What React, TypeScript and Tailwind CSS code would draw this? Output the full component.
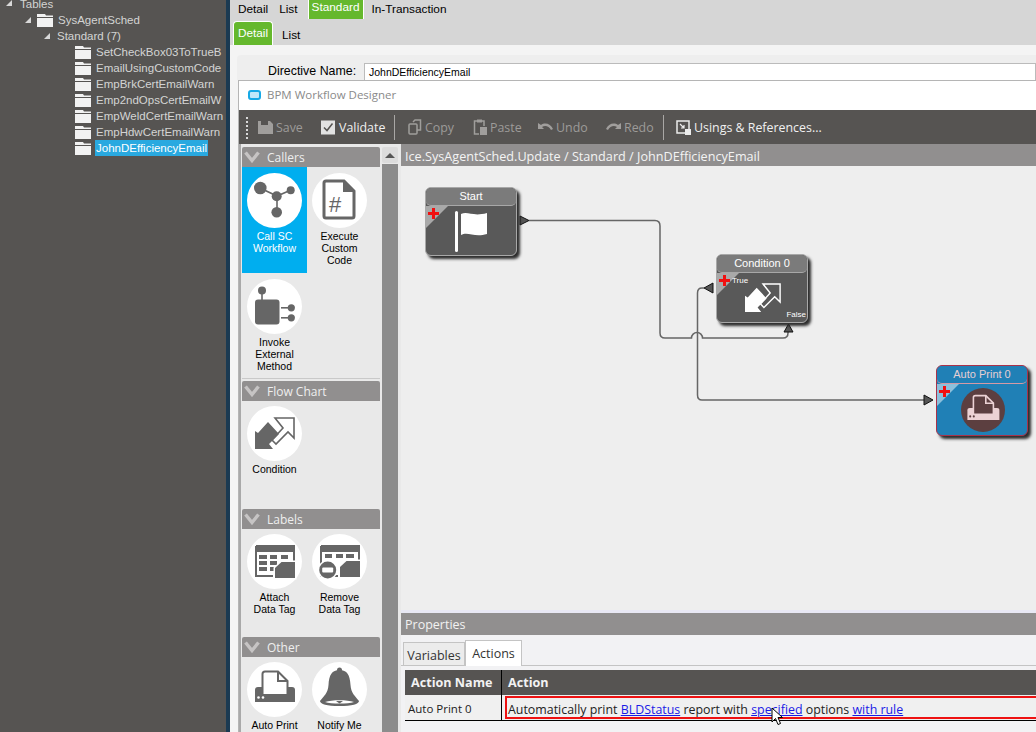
import React from 'react';

const treeFont = "font-['Liberation_Sans',sans-serif]";
const uiFont = "font-['Open_Sans',sans-serif]";

const Folder = () => (
  <svg width="16" height="13" viewBox="0 0 16 13" className="shrink-0">
    <path d="M0 0H8L9 1.5H16V3H0Z M0 4H16V13H0Z" fill="#f2f2f2" />
  </svg>
);

const TreeArrow = () => (
  <svg width="6" height="6" viewBox="0 0 6 6" className="shrink-0">
    <path d="M6 0V6H0Z" fill="#d8d8d8" />
  </svg>
);

const TreeRow = ({ indent, arrow, folder, label, selected }: { indent: string; arrow?: boolean; folder?: boolean; label: string; selected?: boolean }) => (
  <div className={`flex h-[16px] items-center ${indent}`}>
    {arrow && <TreeArrow />}
    {arrow && <div className="w-[6px]" />}
    {folder && <Folder />}
    <span className={`px-[1px] text-[11.5px] leading-[16px] whitespace-nowrap ${folder ? 'ml-[4px]' : ''} ${selected ? 'bg-[#29a9e0] text-white' : 'text-[#d4d4d4]'}`}>{label}</span>
  </div>
);

const Sidebar = () => (
  <div className={`w-[226px] h-full shrink-0 bg-[#565452] overflow-hidden ${treeFont}`}>
    <div className="flex h-[12px] items-start pl-[6px]">
      <TreeArrow />
      <span className="ml-[8px] text-[11.5px] leading-[8px] text-[#d4d4d4]">Tables</span>
    </div>
    <TreeRow indent="pl-[25px]" arrow folder label="SysAgentSched" />
    <TreeRow indent="pl-[44px]" arrow label="Standard (7)" />
    <TreeRow indent="pl-[75px]" folder label="SetCheckBox03ToTrueB" />
    <TreeRow indent="pl-[75px]" folder label="EmailUsingCustomCode" />
    <TreeRow indent="pl-[75px]" folder label="EmpBrkCertEmailWarn" />
    <TreeRow indent="pl-[75px]" folder label="Emp2ndOpsCertEmailW" />
    <TreeRow indent="pl-[75px]" folder label="EmpWeldCertEmailWarn" />
    <TreeRow indent="pl-[75px]" folder label="EmpHdwCertEmailWarn" />
    <TreeRow indent="pl-[75px]" folder label="JohnDEfficiencyEmail" selected />
  </div>
);

// toolbar icons
const SaveIcon = () => (
  <svg width="15" height="15" viewBox="0 0 15 15"><path d="M0 1H3V5H10V1H12L15 4V14H0Z" fill="#a09e9c" /></svg>
);
const CheckIcon = () => (
  <svg width="15" height="15" viewBox="0 0 15 15"><rect width="14" height="14" y="0.5" fill="#e2e2e2" /><path d="M3 7.5L6 10.5L11.5 3.5" fill="none" stroke="#565452" strokeWidth="1.5" /></svg>
);
const CopyIcon = () => (
  <svg width="14" height="16" viewBox="0 0 14 16"><path d="M5 3L7 1H12.5V11H9" fill="none" stroke="#a09e9c" strokeWidth="1.5" /><rect x="1" y="5" width="8" height="10" rx="1" fill="none" stroke="#a09e9c" strokeWidth="1.5" /></svg>
);
const PasteIcon = () => (
  <svg width="14" height="16" viewBox="0 0 14 16"><path d="M6 15H1.5V2H11V7" fill="none" stroke="#a09e9c" strokeWidth="1.5" /><rect x="4" y="0.5" width="5" height="3" fill="#a09e9c" /><rect x="7" y="8" width="7" height="8" fill="#a09e9c" /></svg>
);
const UndoIcon = () => (
  <svg width="15" height="10" viewBox="0 0 15 10"><path d="M0 1V7H6L4 5C7 3 11 4 13 8L15 7C13 2 7 0 3 3Z" fill="#a09e9c" /></svg>
);
const RedoIcon = () => (
  <svg width="15" height="10" viewBox="0 0 15 10"><path d="M15 1V7H9L11 5C8 3 4 4 2 8L0 7C2 2 8 0 12 3Z" fill="#a09e9c" /></svg>
);
const UsingsIcon = () => (
  <svg width="15" height="15" viewBox="0 0 15 15"><rect x="1" y="1" width="12" height="12" fill="none" stroke="#ececec" strokeWidth="1.5" /><path d="M4 4L8 8M8 5V8H5" fill="none" stroke="#ececec" strokeWidth="1.2" /><rect x="9" y="9" width="6" height="6" fill="#ececec" /></svg>
);

const ToolButton = ({ icon, label, off, className }: { icon: React.ReactNode; label: string; off?: boolean; className: string }) => (
  <div className={`flex items-center gap-[3px] ${className}`}>
    {icon}
    <span className={`pt-[1px] text-[12.4px] whitespace-nowrap ${off ? 'text-[#9d9b99]' : 'text-[#f0f0f0]'}`}>{label}</span>
  </div>
);

const Toolbar = () => (
  <div className={`h-[34px] shrink-0 flex items-center pt-[1px] bg-[#565452] ${uiFont}`}>
    <div className="ml-[7px] h-[22px] w-[1px] border-l-2 border-dotted border-[#d8d8d8]" />
    <ToolButton icon={<SaveIcon />} label="Save" off className="ml-[10px] w-[63px]" />
    <ToolButton icon={<CheckIcon />} label="Validate" className="w-[73px]" />
    <div className="h-[25px] w-[1px] bg-[#a9a7a5]" />
    <ToolButton icon={<CopyIcon />} label="Copy" off className="ml-[13px] w-[65px]" />
    <ToolButton icon={<PasteIcon />} label="Paste" off className="w-[65px]" />
    <ToolButton icon={<UndoIcon />} label="Undo" off className="w-[68px]" />
    <ToolButton icon={<RedoIcon />} label="Redo" off className="w-[57px]" />
    <div className="h-[25px] w-[1px] bg-[#a9a7a5]" />
    <ToolButton icon={<UsingsIcon />} label="Usings & References..." className="ml-[12px]" />
  </div>
);

// palette glyphs, all on a 55 unit circle
const WorkflowGlyph = () => (
  <g fill="#666" stroke="#666">
    <path d="M13 15L30 23L44 17M30 23V39" strokeWidth="1.6" fill="none" />
    <circle cx="13.3" cy="15" r="6.3" stroke="none" />
    <circle cx="29.7" cy="23.3" r="5" stroke="none" />
    <circle cx="43.7" cy="17.3" r="4" stroke="none" />
    <circle cx="29.7" cy="39.3" r="5.3" stroke="none" />
  </g>
);
const CodeGlyph = () => (
  <g>
    <path d="M14 8H32L42 18V43A2 2 0 0 1 40 45H14A2 2 0 0 1 12 43V10A2 2 0 0 1 14 8Z" fill="none" stroke="#666" strokeWidth="3" />
    <path d="M31 8L42 19H31Z" fill="#666" />
    <text x="23" y="39" textAnchor="middle" fontSize="22" fontFamily="Liberation Sans" fill="#666">#</text>
  </g>
);
const InvokeGlyph = () => (
  <g fill="#666">
    <circle cx="15" cy="11.5" r="4" />
    <rect x="14.2" y="12" width="1.6" height="9" />
    <rect x="8" y="20.5" width="24.5" height="25" rx="3" />
    <rect x="34" y="28" width="7" height="1.6" />
    <rect x="34" y="38" width="7" height="1.6" />
    <circle cx="44.3" cy="28.8" r="3.6" />
    <circle cx="44.3" cy="38.8" r="3.6" />
  </g>
);
const ConditionGlyph = ({ color = '#666', dx = 8, dy = 11 }: { color?: string; dx?: number; dy?: number }) => (
  <g transform={`translate(${dx} ${dy})`}>
    <path d="M0 14L3 16L13 5L24 17L14 27L18 32H0Z" fill={color} />
    <path d="M20 1H39V21L33 15L21 27L17 23L28 11Z" fill="none" stroke={color} strokeWidth="1.6" />
  </g>
);
const TableFrame = () => (
  <g>
    <path d="M9 12H47V18H9Z" fill="#666" />
    <path d="M9 12H47V30M9 12V42H26" fill="none" stroke="#666" strokeWidth="2" />
    <path d="M9.5 11.5A2 2 0 0 1 11 11H45A2 2 0 0 1 47 13V18H9Z" fill="#666" />
  </g>
);
const AttachGlyph = () => (
  <g fill="#666">
    <TableFrame />
    <path d="M12 21H20V25H12ZM23 21H30V25H23ZM34 21H41V25H34ZM12 27H20V31H12ZM23 27H30V31H23ZM12 33H20V37H12ZM23 33H27V37H23Z" />
    <path d="M34 26.5H49.5V45.5H26.5V33.5Z" fill="#fff" />
    <path d="M34.5 28H48V44H28V34Z" />
  </g>
);
const RemoveGlyph = () => (
  <g fill="#666">
    <TableFrame />
    <path d="M13 20H20V24H13ZM24 20H31V24H24ZM34 20H42V24H34Z" />
    <path d="M34 25.5H49.5V44.5H26.5V32.5Z" fill="#fff" />
    <path d="M34.5 27H48V43H28V33Z" />
    <circle cx="15.7" cy="36" r="10" fill="#fff" />
    <circle cx="15.7" cy="36" r="8.5" />
    <rect x="10.2" y="33.5" width="11" height="5" rx="1" fill="#fff" />
  </g>
);
const PrinterGlyph = ({ color = '#666', paper = '#fff' }: { color?: string; paper?: string }) => (
  <g>
    <path d="M11 25H45C47 25 48 26 48 28V40H8V28C8 26 9 25 11 25Z" fill={color} />
    <path d="M15.5 33V12C15.5 10.5 16.5 9.5 18 9.5H31L40.5 19V33Z" fill={paper} stroke={color} strokeWidth="2" />
    <path d="M31 9.5V19H40.5" fill="none" stroke={color} strokeWidth="2" />
    <circle cx="11.5" cy="35.5" r="1.3" fill={paper} />
    <circle cx="16" cy="35.5" r="1.3" fill={paper} />
  </g>
);
const BellGlyph = () => (
  <g fill="#666">
    <circle cx="27.5" cy="8" r="2.5" />
    <path d="M27.5 8C35 8 38 13 38.5 23C39 31 43 34 47 39C47 42 40 44 27.5 44C15 44 8 42 8 39C12 34 16 31 16.5 23C17 13 20 8 27.5 8Z" />
    <path d="M13 40C20 37.5 35 37.5 42 40C36 42 19 42 13 40Z" fill="#fff" />
    <path d="M24 39H31L27.5 41.5Z" />
  </g>
);

const PaletteItem = ({ glyph, label, active, pad }: { glyph: React.ReactNode; label: string[]; active?: boolean; pad: string }) => (
  <div className={`w-[65px] h-[106px] flex flex-col items-center ${pad} ${active ? 'bg-[#00aeef]' : ''}`}>
    <svg width="55" height="55" viewBox="0 0 55 55" className="shrink-0">
      <circle cx="27.5" cy="27.5" r="27.5" fill="#fff" />
      {glyph}
    </svg>
    <div className={`mt-[2px] text-center text-[10.5px] leading-[12px] whitespace-nowrap ${active ? 'text-white' : 'text-black'}`}>
      {label.map((l) => <div key={l}>{l}</div>)}
    </div>
  </div>
);

const SectionHeader = ({ title }: { title: string }) => (
  <div className={`h-[20px] flex items-center rounded-t-[2px] bg-[#918f8f] ${uiFont}`}>
    <svg width="16" height="12" viewBox="0 0 16 12" className="ml-[2px]"><path d="M1.5 1.5L8 9.5L14.5 1.5" fill="none" stroke="#c6c4c4" strokeWidth="3.4" /></svg>
    <span className="ml-[7px] pt-[2px] text-[12px] text-[#eeeeee]">{title}</span>
  </div>
);

const Palette = () => (
  <div className={`w-[162px] h-full shrink-0 flex overflow-hidden bg-[#e9e9e9] border-l-2 border-[#a9a9a9] ${treeFont}`}>
    <div className="w-[141px] pt-[3px] pl-[1px] pr-[2px] shrink-0">
      <SectionHeader title="Callers" />
      <div className="flex flex-wrap">
        <PaletteItem pad="pt-[6px]" active glyph={<WorkflowGlyph />} label={['Call SC', 'Workflow']} />
        <PaletteItem pad="pt-[6px]" glyph={<CodeGlyph />} label={['Execute', 'Custom', 'Code']} />
        <PaletteItem pad="pt-[6px]" glyph={<InvokeGlyph />} label={['Invoke', 'External', 'Method']} />
      </div>
      <div className="h-[1px] -mt-[1px] mb-[2px] bg-[#c9c9c9]" />
      <SectionHeader title="Flow Chart" />
      <PaletteItem pad="pt-[5px]" glyph={<ConditionGlyph />} label={['Condition']} />
      <div className="h-[2px]" />
      <SectionHeader title="Labels" />
      <div className="flex">
        <PaletteItem pad="pt-[5px]" glyph={<AttachGlyph />} label={['Attach', 'Data Tag']} />
        <PaletteItem pad="pt-[5px]" glyph={<RemoveGlyph />} label={['Remove', 'Data Tag']} />
      </div>
      <div className="h-[2px]" />
      <SectionHeader title="Other" />
      <div className="flex">
        <PaletteItem pad="pt-[5px]" glyph={<PrinterGlyph />} label={['Auto Print']} />
        <PaletteItem pad="pt-[5px]" glyph={<BellGlyph />} label={['Notify Me']} />
      </div>
    </div>
    <div className="w-[16px] pt-[3px] shrink-0 flex flex-col">
      <div className="h-[16px] flex items-center justify-center rounded-[2px] bg-[#dcdcdc]">
        <div className="w-0 h-0 border-x-[5px] border-x-transparent border-b-[5px] border-b-[#555]" />
      </div>
      <div className="flex-1 mt-[1px] bg-[#8c8c8c]" />
    </div>
  </div>
);

const Plus = () => (
  <svg width="11" height="11" viewBox="0 0 11 11" className="absolute left-[2px] top-[2px]"><path d="M4 0H7V4H11V7H7V11H4V7H0V4H4Z" fill="#f01010" /></svg>
);

const Node = ({ title, className, headClass, triClass, children }: { title: string; className: string; headClass: string; triClass: string; children?: React.ReactNode }) => (
  <div className={`absolute w-[92px] rounded-[6px] border shadow-[3px_3px_3px_#2c2c2c] overflow-hidden ${className}`}>
    <div className={`h-[18px] text-center text-[11px] leading-[17px] rounded-[5px] border-b ${headClass}`}>{title}</div>
    <div className={`absolute left-0 top-[18px] w-[22px] h-[22px] [clip-path:polygon(0_0,100%_0,0_100%)] ${triClass}`} />
    <div className="absolute left-0 top-[18px]"><Plus /></div>
    {children}
  </div>
);

const Arrow = ({ points }: { points: string }) => <polygon points={points} fill="#555" stroke="#111" strokeWidth="1" />;

const Canvas = () => (
  <div className={`relative flex-1 min-h-0 overflow-hidden bg-[#eeeeee] ${treeFont}`}>
    <svg className="absolute left-0 top-0" width="635" height="446" viewBox="401 166 635 446">
      <path d="M529 220.5H655Q660 220.5 660 226V333Q660 338 665 338H691.5A5.5 5.5 0 0 1 702.5 338H783Q788 338 788 333V331" fill="none" stroke="#666" strokeWidth="1.5" />
      <path d="M704 288H702Q697.5 288 697.5 293V395Q697.5 400 702 400H924" fill="none" stroke="#666" strokeWidth="1.5" />
      <Arrow points="520,216 529,220.5 520,225" />
      <Arrow points="713,283 704,288 713,293" />
      <Arrow points="784,332 788.5,324 793,332" />
      <Arrow points="924,395 933,400 924,405" />
    </svg>
    <Node title="Start" className="left-[24px] top-[21px] h-[69px] bg-[#595959] border-[#a8a8a8]" headClass="bg-[#7b7b7b] border-[#a8a8a8] text-white" triClass="bg-[#a9a9a9]">
      <svg width="36" height="44" viewBox="0 0 36 44" className="absolute left-[28px] top-[22px]">
        <rect x="1" y="1" width="3" height="41" rx="1.5" fill="#fff" />
        <path d="M7 4C14 1 19 7 33 3V24C20 28 14 21 7 25Z" fill="#fff" />
      </svg>
    </Node>
    <Node title="Condition 0" className="left-[315px] top-[88px] h-[69px] bg-[#595959] border-[#a8a8a8]" headClass="bg-[#7b7b7b] border-[#a8a8a8] text-white" triClass="bg-[#a9a9a9]">
      <span className="absolute left-[15px] top-[20px] text-[8px] text-white">True</span>
      <span className="absolute right-[1px] bottom-[1px] text-[8px] text-white">False</span>
      <svg width="36" height="30" viewBox="0 0 40 33" className="absolute left-[28px] top-[28px]">
        <ConditionGlyph color="#fff" dx={0} dy={0} />
      </svg>
    </Node>
    <Node title="Auto Print 0" className="left-[535px] top-[199px] h-[71px] bg-[#2080b6] border-[#a8324a]" headClass="bg-[#2080b6] border-[#d59aa5] text-[#e6cfd3]" triClass="bg-[#8cc0dc]">
      <svg width="44" height="44" viewBox="0 0 55 55" className="absolute left-[24px] top-[22px]">
        <circle cx="27.5" cy="27.5" r="27.5" fill="#5c3f40" />
        <PrinterGlyph color="#ecd2d4" paper="#5c3f40" />
      </svg>
    </Node>
  </div>
);

const Properties = () => (
  <div className={`h-[122px] shrink-0 flex flex-col bg-[#f2f2f4] ${uiFont}`}>
    <div className="h-[3px] bg-[#e8e8f4]" />
    <div className="h-[22px] flex items-center pl-[4px] pt-[3px] bg-[#918f8f] text-[12.5px] text-[#f2f2f2]">Properties</div>
    <div className="h-[31px] flex items-end pl-[2px] border-b border-[#c4c4c4]">
      <div className="h-[23px] w-[62px] pt-[4px] flex items-center justify-center bg-[#ececec] border border-b-0 border-[#c4c4c4] text-[12.5px] text-[#333]">Variables</div>
      <div className="h-[26px] w-[57px] -mb-[1px] pt-[2px] flex items-center justify-center bg-white border border-b-0 border-[#c4c4c4] text-[12.5px] text-[#333]">Actions</div>
    </div>
    <div className="mt-[4px] ml-[4px]">
      <div className="h-[25px] flex bg-[#565452] text-[12.6px] font-bold text-[#f2f2f2]">
        <div className="w-[97px] pl-[6px] leading-[25px] border-r border-black whitespace-nowrap">Action Name</div>
        <div className="pl-[6px] leading-[25px]">Action</div>
      </div>
      <div className="relative h-[26px] flex items-center bg-[#f0f0f0] border-b border-black text-[12.4px] text-[#222]">
        <div className="w-[97px] h-full pl-[3px] pt-[1px] text-[11.5px] leading-[25px] border-r border-black whitespace-nowrap">Auto Print 0</div>
        <div className="flex-1 h-[23px] ml-[3px] -mr-[4px] pl-[1px] pt-[1px] leading-[21px] border-2 border-[#ee1111] whitespace-nowrap">
          Automatically print <a className="text-[#1a1ae6] underline">BLDStatus</a> report with <a className="text-[#1a1ae6] underline">specified</a> options <a className="text-[#1a1ae6] underline">with rule</a>
        </div>
        <svg width="12" height="19" viewBox="0 0 12 19" className="absolute left-[366px] top-[12px]">
          <path d="M1 1V15L4.5 11.5L7 17.5L9.5 16.5L7 10.5H11.5Z" fill="#fff" stroke="#000" strokeWidth="1" />
        </svg>
      </div>
    </div>
  </div>
);

export default function App() {
  return (
    <div className="w-[1036px] h-[732px] flex overflow-hidden">
      <Sidebar />
      <div className="w-[4px] h-full shrink-0 bg-[#1b3a52]" />
      <div className="flex-1 min-w-0 h-full flex flex-col bg-[#f0f0f0] overflow-hidden">
        <div className={`h-[19px] shrink-0 flex items-start bg-[#d6d6d6] text-[11.8px] text-black ${treeFont}`}>
          <span className="ml-[8px] leading-[18px]">Detail</span>
          <span className="ml-[11px] leading-[18px]">List</span>
          <span className="ml-[10px] w-[56px] h-[19px] text-center leading-[15px] bg-[#65b82d] text-white border-x border-white">Standard</span>
          <span className="ml-[8px] leading-[18px]">In-Transaction</span>
        </div>
        <div className={`h-[26px] shrink-0 flex items-end bg-[#d6d6d6] text-[11.8px] text-black ${treeFont}`}>
          <span className="ml-[3px] w-[40px] h-[24px] text-center leading-[23px] rounded-t-[4px] bg-[#65b82d] text-white border border-b-0 border-white">Detail</span>
          <span className="ml-[9px] h-[20px] leading-[20px]">List</span>
        </div>
        <div className="flex-1 min-h-0 pt-[10px] pl-[7px] flex flex-col bg-[#f4f4f4]">
          <div className={`h-[25px] shrink-0 flex items-end overflow-hidden rounded-tl-[4px] bg-[#eeeeee] pl-[31px] text-[12.4px] text-black ${treeFont}`}>
            <span className="w-[88px] h-[16px] leading-[16px] mb-[1px] whitespace-nowrap">Directive Name:</span>
            <div className="ml-[8px] flex-1 h-[18px] -mb-[1px] pl-[4px] bg-white border border-[#bbbbbb] text-[10.5px] leading-[17px]">JohnDEfficiencyEmail</div>
          </div>
          <div className="ml-[1px] flex-1 min-h-0 flex flex-col bg-white border-l border-t border-[#b5b5b5]">
            <div className={`h-[29px] shrink-0 flex items-center pl-[9px] pb-[1px] bg-white ${uiFont}`}>
              <div className="w-[13px] h-[10px] rounded-[3px] border-2 border-[#16a9e6] bg-[#bfe8fa]" />
              <span className="ml-[6px] pb-[1px] text-[11.5px] text-[#8a8a8a]">BPM Workflow Designer</span>
            </div>
            <Toolbar />
            <div className="flex-1 min-h-0 flex">
              <Palette />
              <div className="flex-1 min-w-0 flex flex-col">
                <div className={`h-[22px] shrink-0 flex items-center pl-[4px] pt-[3px] bg-[#918f8f] text-[12.65px] text-[#f4f4f4] ${uiFont}`}>Ice.SysAgentSched.Update / Standard / JohnDEfficiencyEmail</div>
                <Canvas />
                <Properties />
              </div>
            </div>
          </div>
        </div>
      </div>
    </div>
  );
}
